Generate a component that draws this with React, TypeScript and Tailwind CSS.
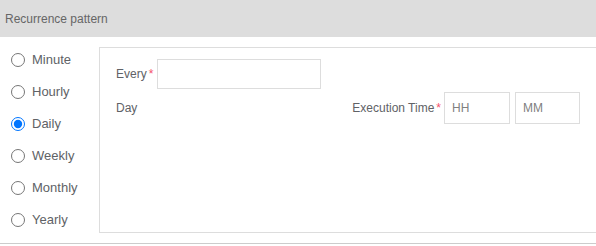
import React from "react";

const options = ["Minute", "Hourly", "Daily", "Weekly", "Monthly", "Yearly"];

export default function App() {
  return (
    <div className="w-[596px] h-[246px] bg-white font-['Liberation_Sans',Arial,sans-serif]">
      <div className="h-[37px] bg-[#dddddd] flex items-center pl-[5px] text-[12px] text-[#666666]">
        Recurrence pattern
      </div>
      <div className="flex items-start h-[207px] border-b border-[#cccccc]">
        <div className="w-[99px] pt-[7px] flex flex-col">
          {options.map((o) => (
            <label key={o} className="h-[32px] flex items-center">
              <input
                type="radio"
                name="recurrence"
                defaultChecked={o === "Daily"}
                className="m-0 ml-[11px] w-[14px] h-[14px]"
              />
              <span className="ml-[7px] text-[13px] text-[#606266]">{o}</span>
            </label>
          ))}
        </div>
        <div className="flex-1 mt-[10px] h-[186px] border border-r-0 border-[#dddddd] pl-[16px] pt-[11px]">
          <div className="flex items-center h-[30px] text-[12px] text-[#606266]">
            <span>Every</span>
            <span className="ml-[2px] text-[#f4516c]">*</span>
            <input className="ml-[4px] w-[164px] h-[30px] border border-[#dddddd] outline-none px-[7px] text-[12px]" />
          </div>
          <div className="flex items-center h-[32px] mt-[3px] text-[12px] text-[#606266]">
            <span className="w-[236px]">Day</span>
            <div className="w-[92px] flex justify-end pr-[3px]">
              <span>Execution Time</span>
              <span className="ml-[2px] text-[#f4516c]">*</span>
            </div>
            <input
              placeholder="HH"
              className="w-[66px] h-[32px] border border-[#dddddd] outline-none px-[7px] text-[12px] placeholder:text-[#808080]"
            />
            <input
              placeholder="MM"
              className="ml-[5px] w-[65px] h-[32px] border border-[#dddddd] outline-none px-[7px] text-[12px] placeholder:text-[#808080]"
            />
          </div>
        </div>
      </div>
    </div>
  );
}
